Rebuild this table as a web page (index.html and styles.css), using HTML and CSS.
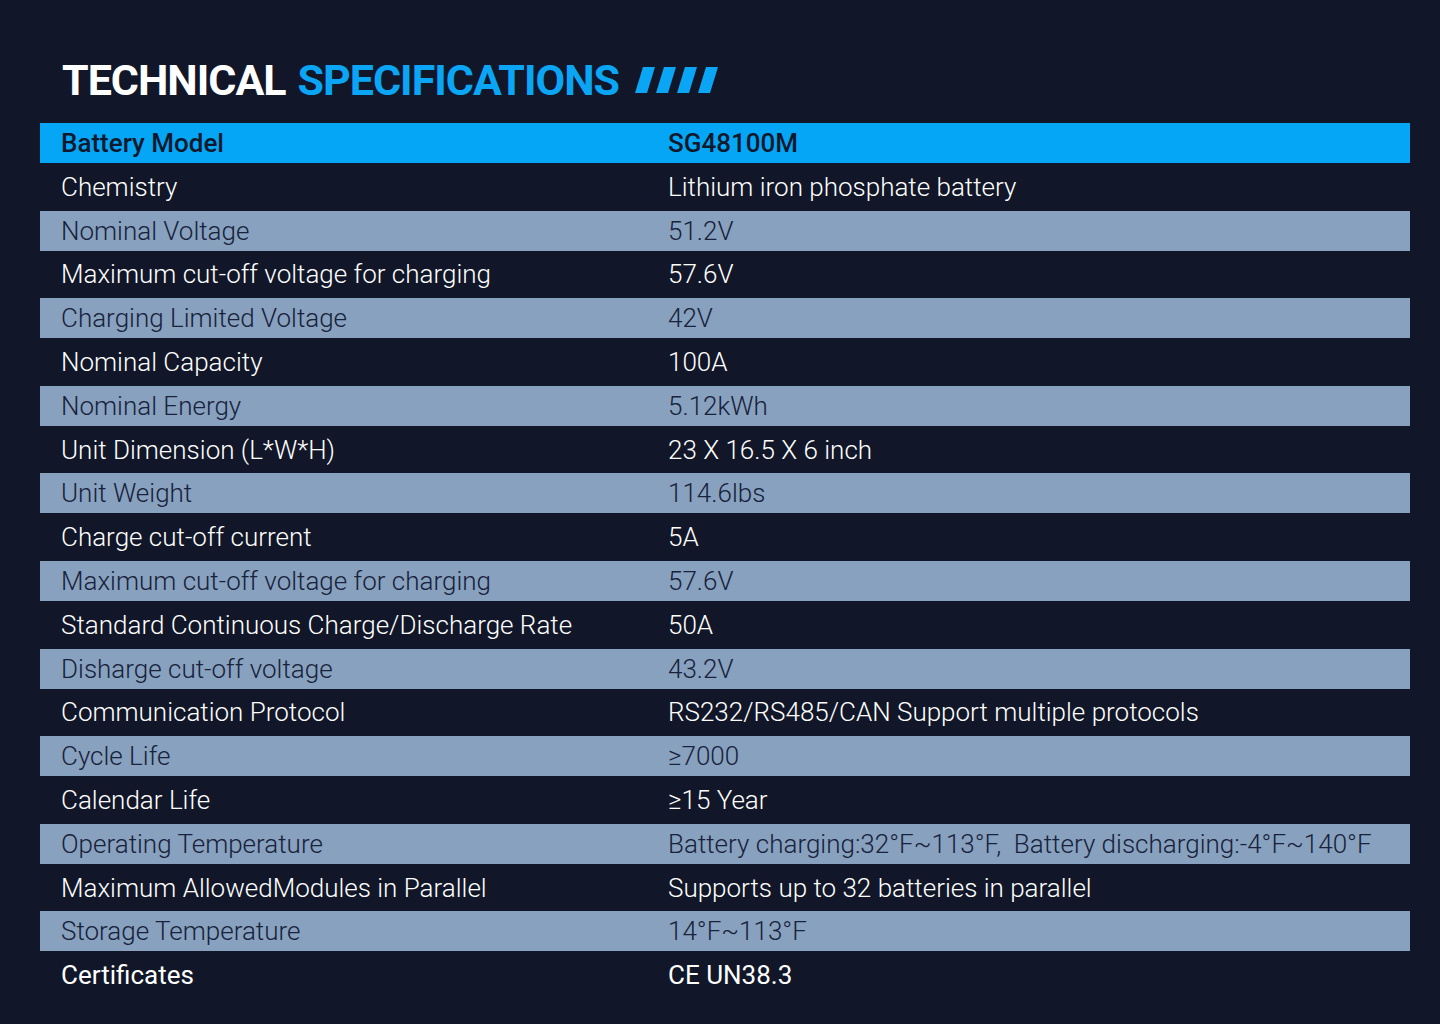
FILE: index.html
```html
<!DOCTYPE html>
<html lang="en">
<head>
<meta charset="utf-8">
<title>Technical Specifications</title>
<link rel="stylesheet" href="styles.css">
</head>
<body>
<main class="page">
  <h1 class="title">
    <span class="t-white">TECHNICAL</span>
    <span class="t-blue">SPECIFICATIONS</span>
    <svg class="stripes" width="84" height="26" viewBox="0 0 84 26" aria-hidden="true">
      <polygon points="8,0 20,0 12,26 0,26" fill="#0aa6f5"/>
      <polygon points="29,0 41,0 33,26 21,26" fill="#0aa6f5"/>
      <polygon points="50,0 62,0 54,26 42,26" fill="#0aa6f5"/>
      <polygon points="71,0 83,0 75,26 63,26" fill="#0aa6f5"/>
    </svg>
  </h1>
  <div class="table">
    <div class="row head"><div class="k">Battery Model</div><div class="v">SG48100M</div></div>
    <div class="row dark"><div class="k">Chemistry</div><div class="v">Lithium iron phosphate battery</div></div>
    <div class="row light"><div class="k">Nominal Voltage</div><div class="v">51.2V</div></div>
    <div class="row dark"><div class="k">Maximum cut-off voltage for charging</div><div class="v">57.6V</div></div>
    <div class="row light"><div class="k">Charging Limited Voltage</div><div class="v">42V</div></div>
    <div class="row dark"><div class="k">Nominal Capacity</div><div class="v">100A</div></div>
    <div class="row light"><div class="k">Nominal Energy</div><div class="v">5.12kWh</div></div>
    <div class="row dark"><div class="k">Unit Dimension (L*W*H)</div><div class="v">23 X 16.5 X 6 inch</div></div>
    <div class="row light"><div class="k">Unit Weight</div><div class="v">114.6lbs</div></div>
    <div class="row dark"><div class="k">Charge cut-off current</div><div class="v">5A</div></div>
    <div class="row light"><div class="k">Maximum cut-off voltage for charging</div><div class="v">57.6V</div></div>
    <div class="row dark"><div class="k">Standard Continuous Charge/Discharge Rate</div><div class="v">50A</div></div>
    <div class="row light"><div class="k">Disharge cut-off voltage</div><div class="v">43.2V</div></div>
    <div class="row dark"><div class="k">Communication Protocol</div><div class="v">RS232/RS485/CAN Support multiple protocols</div></div>
    <div class="row light"><div class="k">Cycle Life</div><div class="v">≥7000</div></div>
    <div class="row dark"><div class="k">Calendar Life</div><div class="v">≥15 Year</div></div>
    <div class="row light"><div class="k">Operating Temperature</div><div class="v">Battery charging:32°F~113°F,&nbsp; Battery discharging:-4°F~140°F</div></div>
    <div class="row dark"><div class="k">Maximum AllowedModules in Parallel</div><div class="v">Supports up to 32 batteries in parallel</div></div>
    <div class="row light"><div class="k">Storage Temperature</div><div class="v">14°F~113°F</div></div>
    <div class="row dark last"><div class="k">Certificates</div><div class="v">CE UN38.3</div></div>
  </div>
</main>
</body>
</html>
```

FILE: styles.css
```css
* { box-sizing: border-box; }
html, body {
  margin: 0;
  padding: 0;
  background: #111728;
}
body {
  width: 1440px;
  height: 1024px;
  overflow: hidden;
  font-family: Roboto, "Noto Sans", sans-serif;
}
.page {
  padding: 37px 30px 0 40px;
}
.title {
  margin: 0 0 0 22px;
  height: 86px;
  display: flex;
  align-items: center;
  gap: 12px;
  font-size: 43px;
  font-weight: 700;
  line-height: 1;
  letter-spacing: -1px;
}
.title span {
  display: inline-block;
  white-space: nowrap;
}
.t-white { color: #ffffff; }
.t-blue { color: #0aa6f5; }
.stripes { margin-left: 4px; flex: none; }
.table {
  display: flex;
  flex-direction: column;
}
.row {
  display: grid;
  grid-template-columns: 607px 1fr;
  align-items: center;
  padding-left: 21px;
  font-size: 26px;
  font-weight: 300;
  white-space: nowrap;
}
.head {
  height: 40px;
  background: #06a6f7;
  color: #10192c;
  font-weight: 500;
}
.light {
  height: 40px;
  background: #87a1bf;
  color: #18223a;
}
.dark {
  height: 47.6px;
  color: #ffffff;
}
.last { font-weight: 400; }
```
